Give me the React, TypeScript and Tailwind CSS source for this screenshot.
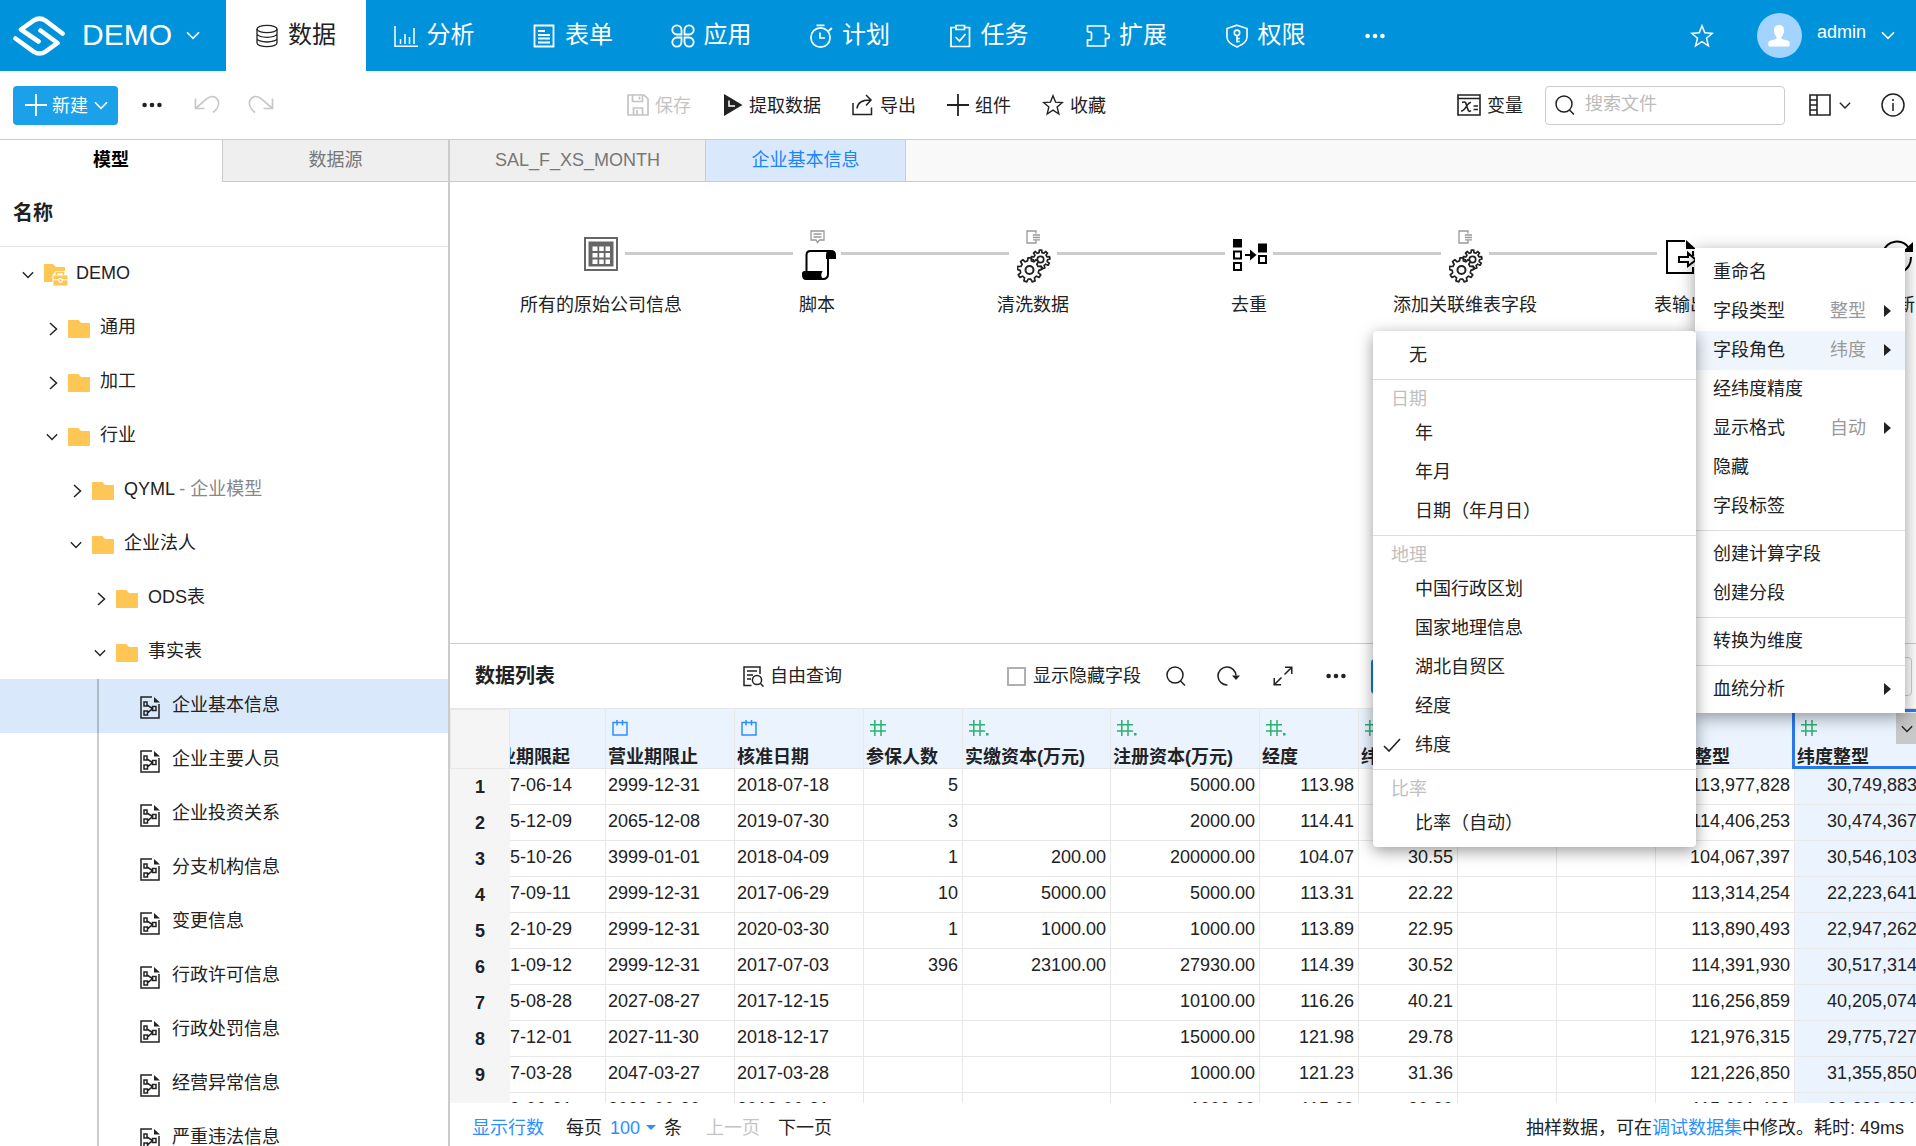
import React from "react";
import type { ReactNode } from "react";

function Svg({
  className,
  box,
  children,
  sw = 1.5,
}: {
  className: string;
  box: string;
  children: ReactNode;
  sw?: number;
}) {
  return (
    <svg
      className={`shrink-0 ${className}`}
      viewBox={box}
      fill="none"
      stroke="currentColor"
      strokeWidth={sw}
      aria-hidden="true"
    >
      {children}
    </svg>
  );
}

function ChevronDown({ className }: { className: string }) {
  return (
    <Svg className={className} box="0 0 14 9" sw={1.6}>
      <path d="M1 1.2 7 7.4 13 1.2" />
    </Svg>
  );
}

function Dots({ className }: { className: string }) {
  return (
    <svg className={`shrink-0 ${className}`} viewBox="0 0 20 6" fill="currentColor" aria-hidden="true">
      <circle cx="2.6" cy="3" r="2.3" />
      <circle cx="10" cy="3" r="2.3" />
      <circle cx="17.4" cy="3" r="2.3" />
    </svg>
  );
}

function Logo() {
  return (
    <Svg className="h-10 w-[52px]" box="0 0 52 40" sw={4.6}>
      <path strokeLinecap="round" strokeLinejoin="round" d="M49.5 17.5 32.5 4.6Q26.500 .6 20.500 4.6L8 13.500 25.500 25.500" />
      <path strokeLinecap="round" strokeLinejoin="round" d="M2.500 22.500 20.500 35.600Q26.500 39.400 32.500 35.600L44.500 27 27.500 14.500" />
    </Svg>
  );
}

function gearPath(cx: number, cy: number, outer: number, inner: number, teeth: number) {
  const points: string[] = [];
  const step = (Math.PI * 2) / teeth;
  for (let i = 0; i < teeth; i++) {
    const a = i * step - Math.PI / 2;
    const corners: [number, number][] = [
      [inner, -0.3],
      [outer, -0.18],
      [outer, 0.18],
      [inner, 0.3],
    ];
    for (const [r, t] of corners) {
      points.push(`${(cx + r * Math.cos(a + t * step)).toFixed(2)} ${(cy + r * Math.sin(a + t * step)).toFixed(2)}`);
    }
  }
  return `M${points.join("L")}Z`;
}

const navIcons: Record<string, ReactNode> = {
  数据: (
    <Svg className="h-6 w-6" box="0 0 24 24" sw={1.3}>
      <ellipse cx="12" cy="5" rx="10" ry="3.600" />
      <path d="M2 5v14c0 2 4.500 3.600 10 3.600s10-1.600 10-3.600V5M2 9.700c0 2 4.500 3.600 10 3.600s10-1.600 10-3.600M2 14.400C2 16.400 6.500 18 12 18s10-1.600 10-3.600" />
    </Svg>
  ),
  分析: (
    <Svg className="h-6 w-6" box="0 0 24 24">
      <path d="M1 2v20.200h23M6.500 15v5M11 10v10M15.500 13v7M20 4v16" />
    </Svg>
  ),
  表单: (
    <Svg className="h-6 w-6" box="0 0 24 24" sw={1.8}>
      <path d="M2.500 1.500h19v21h-19zM6 7h7M6 11h12M6 14.500h12M6 18.500h12" />
    </Svg>
  ),
  应用: (
    <Svg className="h-6 w-6" box="0 0 24 24" sw={1.8}>
      <path d="M10.500 10.500H6a4.600 4.600 0 1 1 4.500-4.600zM13.500 10.500H18a4.600 4.600 0 1 0-4.500-4.600zM10.500 13.500H6a4.600 4.600 0 1 0 4.500 4.600zM13.500 13.500H18a4.600 4.600 0 1 1-4.500 4.600z" />
    </Svg>
  ),
  计划: (
    <Svg className="h-6 w-6" box="0 0 24 24" sw={1.7}>
      <circle cx="11.500" cy="13.500" r="9.600" />
      <path d="M7.500 1.300h8M19.500 7l3.500-3M11 8.500V14h5" />
    </Svg>
  ),
  任务: (
    <Svg className="h-6 w-6" box="0 0 24 24" sw={1.7}>
      <path d="M7 3.500H3v19h18.500v-19H17M8 1.500h8.500v4H8zM7.500 13l4 4 6-7" />
    </Svg>
  ),
  扩展: (
    <Svg className="h-6 w-6" box="0 0 24 24" sw={1.7}>
      <path d="M1.500 8V2h18v7.500h1.500a2.500 2.500 0 0 1 0 5h-1.500V22h-18v-6h3a1 1 0 0 0 1-1v-1M1.500 8h3a1 1 0 0 1 1 1v5" />
    </Svg>
  ),
  权限: (
    <Svg className="h-6 w-6" box="0 0 24 24" sw={1.6}>
      <path d="M12 1.200 22 4.500V13c0 5-5 8-10 10C7 21 2 18 2 13V4.500z" />
      <circle cx="12" cy="8.800" r="2.700" />
      <path d="M12 11.500v7M12 14.500h2.800M12 17.500h2.800" />
    </Svg>
  ),
};

function Star({ className }: { className: string }) {
  return (
    <Svg className={className} box="0 0 24 24" sw={1.5}>
      <path d="m12 1.800 2.800 7 7.500.500-5.800 4.900 1.900 7.600L12 17.600l-6.400 4.200 1.900-7.600-5.800-4.900 7.500-.500z" />
    </Svg>
  );
}

function TopBar() {
  return (
    <header className="flex h-[71px] shrink-0 items-center bg-[#0092da] text-white">
      <button className="flex h-full w-[226px] shrink-0 items-center pl-[13px]">
        <Logo />
        <span className="ml-[17px] pb-0.5 text-[30px] leading-10">DEMO</span>
        <ChevronDown className="ml-3.5 h-[9px] w-3.5" />
      </button>
      <nav className="flex h-full w-[1109px] shrink-0">
        {Object.keys(navIcons).map((label, i) => (
          <button
            key={label}
            className={
              i === 0
                ? "flex flex-1 items-center gap-[9px] bg-white pl-[29px] text-2xl text-[#222]"
                : "flex flex-1 items-center gap-[9px] pl-[28px] text-2xl"
            }
          >
            {navIcons[label]}
            <span className="pb-0.5">{label}</span>
          </button>
        ))}
      </nav>
      <button className="ml-[30px]" aria-label="更多">
        <Dots className="h-1.5 w-5" />
      </button>
      <div className="ml-auto flex items-center pr-[21px]">
        <button aria-label="收藏夹">
          <Star className="h-6 w-6" />
        </button>
        <span className="ml-[43px] flex size-[45px] items-center justify-center rounded-full bg-[#a3d4ff]">
          <svg className="h-[22px] w-[22px]" viewBox="0 0 22 22" fill="white" aria-hidden="true">
            <path d="M11 0c3.500 0 5 2.300 5 5.200 0 3.300-1.300 5-2.500 6.800v2l6 1.600c1.600.500 2.200 1.200 2.200 2.600V20c0 .900-.500 1.500-1.500 1.500H1.800C.800 21.500.3 20.900.3 20v-1.800c0-1.400.6-2.100 2.200-2.600l6-1.600v-2C7.300 10.200 6 8.500 6 5.200 6 2.300 7.500 0 11 0z" />
          </svg>
        </span>
        <button className="ml-[15px] flex items-center gap-[15px] text-lg">
          <span className="pb-2">admin</span>
          <ChevronDown className="h-[9px] w-3.5" />
        </button>
      </div>
    </header>
  );
}

function Plus({ className }: { className: string }) {
  return (
    <Svg className={className} box="0 0 22 22" sw={1.8}>
      <path d="M11 0v22M0 11h22" />
    </Svg>
  );
}

function Magnifier({ className }: { className: string }) {
  return (
    <Svg className={className} box="0 0 20 20" sw={1.5}>
      <circle cx="9" cy="9" r="8" />
      <path d="m14.500 15 4.500 4.500" />
    </Svg>
  );
}

function ToolButton({ icon, label, muted }: { icon: ReactNode; label: string; muted?: boolean }) {
  return (
    <button className={muted ? "flex items-center gap-1.5 text-lg text-[#c4c4c4]" : "flex items-center gap-1.5 text-lg"}>
      {icon}
      <span className="pt-px">{label}</span>
    </button>
  );
}

function Toolbar() {
  return (
    <div className="flex h-[68px] shrink-0 items-center pl-[13px] pr-[11px]">
      <div className="flex w-[614px] shrink-0 items-center">
        <button className="flex h-[39px] w-[105px] items-center rounded bg-[#1ba0ea] pl-3 text-lg text-white">
          <Plus className="size-[22px]" />
          <span className="ml-[5px] pt-px">新建</span>
          <ChevronDown className="ml-1.5 h-[9px] w-3.5" />
        </button>
        <button className="ml-6" aria-label="更多操作">
          <Dots className="h-1.5 w-5" />
        </button>
        <button className="ml-8 text-[#c8c8c8]" aria-label="撤销">
          <Svg className="h-5 w-[26px]" box="0 0 26 20" sw={1.7}>
            <path d="M1.500 3.500v10h9M1.500 13.500 12 4.500C16 .500 21 .500 23.500 4.500c2.500 4 .500 9-4.500 13" />
          </Svg>
        </button>
        <button className="ml-7 text-[#c8c8c8]" aria-label="重做">
          <Svg className="h-5 w-[26px]" box="0 0 26 20" sw={1.7}>
            <path d="M24.500 3.500v10h-9M24.500 13.500 14 4.500C10 .500 5 .500 2.500 4.500c-2.500 4-.500 9 4.500 13" />
          </Svg>
        </button>
      </div>
      <div className="flex flex-1 items-center gap-[31px]">
        <ToolButton
          muted
          label="保存"
          icon={
            <Svg className="size-[22px]" box="0 0 22 22" sw={1.7}>
              <path d="M1 1h16l4 4v16H1zM5.500 1v6.500h10V1M12.500 2.500v3M6.500 21v-7h9v7M10 16v5" />
            </Svg>
          }
        />
        <ToolButton
          label="提取数据"
          icon={
            <svg className="h-[22px] w-[21px] shrink-0" viewBox="0 0 21 22" aria-hidden="true">
              <path fill="#222" d="M2 0 20.500 11 2 22z" />
              <path fill="none" stroke="white" strokeWidth="1.5" d="M7 6.500v5.500h6" />
            </svg>
          }
        />
        <ToolButton
          label="导出"
          icon={
            <Svg className="size-[22px]" box="0 0 22 22">
              <path d="M1 9v11.500h18.500v-7M5 14.500C5.500 9 10 6 18 6M14 1l5 5-5 5.500" />
            </Svg>
          }
        />
        <ToolButton label="组件" icon={<Plus className="size-[22px]" />} />
        <ToolButton label="收藏" icon={<Star className="size-[22px]" />} />
      </div>
      <div className="flex items-center">
        <ToolButton
          label="变量"
          icon={
            <Svg className="h-[22px] w-6" box="0 0 24 22" sw={1.6}>
              <path d="M1 1h22v20H1zM1 4.500h22" />
              <path d="M5 8.500c4.500-2 4 2 5 4.500s1.500 6 4 3.500M14 8.500c-4-.500-5.500 9-10 8.500M16.500 12h4.500M16.500 15.500h4.500" />
            </Svg>
          }
        />
        <label className="ml-[22px] flex h-[39px] w-60 items-center rounded border border-[#ccc] pl-[9px]">
          <Magnifier className="size-5" />
          <input
            type="text"
            aria-label="搜索文件"
            placeholder="搜索文件"
            className="ml-2.5 w-0 flex-1 bg-transparent pb-0.5 text-lg outline-none placeholder:text-[#bbb]"
          />
        </label>
        <button className="ml-6 flex items-center gap-2" aria-label="布局">
          <Svg className="size-[22px]" box="0 0 22 22" sw={1.6}>
            <path d="M1 1h20v20H1zM8 1v20M1 6h7M1 11h7M1 16h7" />
          </Svg>
          <ChevronDown className="h-[9px] w-3" />
        </button>
        <button className="ml-[30px]" aria-label="信息">
          <Svg className="size-6" box="0 0 24 24" sw={1.5}>
            <circle cx="12" cy="12" r="11" />
            <path d="M12 10v8M12 6v2" />
          </Svg>
        </button>
      </div>
    </div>
  );
}

function Folder() {
  return (
    <svg className="mt-0.5 h-[18px] w-[22px] shrink-0" viewBox="0 0 22 18" fill="#fdc655" aria-hidden="true">
      <path d="M1 0h9.500l2.500 3h8q1 0 1 1v13q0 1-1 1H1q-1 0-1-1V1q0-1 1-1z" />
    </svg>
  );
}

function ProjectFolder() {
  return (
    <svg className="mt-0.5 h-[22px] w-6 shrink-0" viewBox="0 0 24 22" aria-hidden="true">
      <path fill="#fdc655" d="M0 0h9l3 3h9v4h-9.500L8.500 11v7H0z" />
      <path fill="none" stroke="#fdc655" strokeWidth="1.6" d="M12.500 11V8.500h7V11" />
      <path fill="#fdc655" d="M9.500 11.500h14v10h-14z" />
      <path stroke="white" strokeWidth="1.2" d="M9 15.800h15" />
      <circle cx="16.500" cy="16.500" r="1.800" fill="#fdc655" stroke="white" strokeWidth="1.2" />
    </svg>
  );
}

function ModelFile() {
  return (
    <svg className="mt-0.5 h-[23px] w-5 shrink-0" viewBox="0 0 20 23" fill="none" stroke="#222" strokeWidth="1.5" aria-hidden="true">
      <path d="M12 1H1v21h18V8" />
      <path fill="#222" stroke="none" d="M14 1v5.500h6z" />
      <path d="M4 6h3v4H4zM4 15h3.500v4H4zM12.500 10.500H16v4h-3.500zM7 9l5.500 3.500L7.500 17" />
    </svg>
  );
}

type TreeNode = { label: string; note?: string; level: number; kind: "open" | "closed" | "file" };

const tree: TreeNode[] = [
  { label: "DEMO", level: 0, kind: "open" },
  { label: "通用", level: 1, kind: "closed" },
  { label: "加工", level: 1, kind: "closed" },
  { label: "行业", level: 1, kind: "open" },
  { label: "QYML", note: "企业模型", level: 2, kind: "closed" },
  { label: "企业法人", level: 2, kind: "open" },
  { label: "ODS表", level: 3, kind: "closed" },
  { label: "事实表", level: 3, kind: "open" },
  { label: "企业基本信息", level: 4, kind: "file" },
  { label: "企业主要人员", level: 4, kind: "file" },
  { label: "企业投资关系", level: 4, kind: "file" },
  { label: "分支机构信息", level: 4, kind: "file" },
  { label: "变更信息", level: 4, kind: "file" },
  { label: "行政许可信息", level: 4, kind: "file" },
  { label: "行政处罚信息", level: 4, kind: "file" },
  { label: "经营异常信息", level: 4, kind: "file" },
  { label: "严重违法信息", level: 4, kind: "file" },
];

function Indent({ level }: { level: number }) {
  return (
    <>
      {Array.from({ length: level }, (_, i) => (
        <span key={i} className="w-6 shrink-0" />
      ))}
    </>
  );
}

function TreeRow({ node }: { node: TreeNode }) {
  if (node.kind === "file") {
    const selected = node.label === "企业基本信息";
    return (
      <button
        role="treeitem"
        aria-selected={selected}
        className={
          selected
            ? "flex h-[54px] w-full shrink-0 items-center bg-[#d9e9fb] text-left text-lg"
            : "flex h-[54px] w-full shrink-0 items-center text-left text-lg"
        }
      >
        <span className="ml-[97px] mr-[41px] h-full w-0.5 bg-black/20" />
        <ModelFile />
        <span className="ml-3 pb-0.5">{node.label}</span>
      </button>
    );
  }
  return (
    <button role="treeitem" className="flex h-[54px] w-full shrink-0 items-center pl-5 text-left text-lg">
      <Indent level={node.level} />
      <span className="mt-0.5 flex w-4 shrink-0 items-center justify-center">
        {node.kind === "open" ? (
          <ChevronDown className="h-2 w-3" />
        ) : (
          <Svg className="ml-0.5 h-3.5 w-[9px]" box="0 0 9 14">
            <path d="M1 1l6.500 6L1 13" />
          </Svg>
        )}
      </span>
      <span className="ml-2 mr-2 flex w-6 shrink-0">{node.level === 0 ? <ProjectFolder /> : <Folder />}</span>
      <span className="pb-0.5">
        {node.label}
        {node.note && <span className="text-[#888]"> - {node.note}</span>}
      </span>
    </button>
  );
}

function Sidebar() {
  return (
    <aside className="flex w-[450px] shrink-0 flex-col overflow-hidden border-r-2 border-[#ccc]">
      <div className="flex h-[42px] shrink-0 text-lg">
        <button className="w-[222px] pb-0.5 font-bold text-black">模型</button>
        <button className="flex-1 border-b border-l border-[#ccc] bg-[#efefef] pb-0.5 text-[#777]">数据源</button>
      </div>
      <div className="flex h-[65px] shrink-0 items-center border-b border-[#e6e6e6] pl-[13px] pb-0.5 text-xl font-bold">名称</div>
      <div role="tree" className="flex min-h-0 flex-1 flex-col overflow-hidden">
        {tree.map((node) => (
          <TreeRow key={node.label} node={node} />
        ))}
      </div>
    </aside>
  );
}

function GearsIcon() {
  return (
    <Svg className="ml-0.5 mt-3 size-[34px]" box="0 0 34 34" sw={1.7}>
      <path strokeLinejoin="round" d={gearPath(23.5, 10.5, 9.5, 7, 9)} />
      <circle cx="23.500" cy="10.500" r="3.200" />
      <path strokeLinejoin="round" fill="white" d={gearPath(12.5, 21, 12.2, 9.3, 9)} />
      <circle cx="12.500" cy="21" r="4" strokeWidth="2" />
    </Svg>
  );
}

function OutMark() {
  return (
    <Svg className="h-3.5 w-3.5" box="0 0 14 14" sw={1.3}>
      <path d="M10 3.500V1H1v12h9v-2.500M7 5h7M7 7.500h7M7 9.800h7" />
    </Svg>
  );
}

const stages: { label: string; icon: ReactNode; mark?: ReactNode }[] = [
  {
    label: "所有的原始公司信息",
    icon: (
      <svg className="size-[34px]" viewBox="0 0 34 34" aria-hidden="true">
        <path fill="none" stroke="#666" strokeWidth="2" d="M1 1h32v32H1z" />
        <path fill="#666" d="M4.500 4.500h25v25h-25z" />
        <path
          fill="white"
          d="M8.500 9.500h5v4.500h-5zM15.200 9.500h4.500v4.500h-4.500zM21.500 9.500h4.500v4.500h-4.500zM8.500 16h5v4.500h-5zM15.200 16h4.500v4.500h-4.500zM21.500 16h4.500v4.500h-4.500zM8.500 22.500h5v4.500h-5zM15.200 22.500h4.500v4.500h-4.500zM21.500 22.500h4.500v4.500h-4.500z"
        />
      </svg>
    ),
  },
  {
    label: "脚本",
    icon: (
      <svg className="ml-1 mt-[13px] h-[30px] w-[34px]" viewBox="0 0 34 30" fill="none" stroke="black" strokeWidth="2" aria-hidden="true">
        <path d="M4.500 22V5q0-4 4-4H29" />
        <path fill="black" d="M25 8V5q0-4 4-4t4 4v3z" />
        <path d="M26 7v17q0 5-5 5h-4" />
        <path fill="black" d="M1 23.500Q1 22 2.500 22H19q-2 4 1 7H4q-3 0-3-4z" />
      </svg>
    ),
    mark: (
      <Svg className="h-3.5 w-[15px]" box="0 0 15 14" sw={1.3}>
        <path d="M1 1h13v9H9.500L7.500 12.500 6 10H1zM3.500 4h8M3.500 7h8" />
      </Svg>
    ),
  },
  { label: "清洗数据", icon: <GearsIcon />, mark: <OutMark /> },
  {
    label: "去重",
    icon: (
      <svg className="ml-0.5 mt-px size-[34px]" viewBox="0 0 34 34" fill="none" stroke="black" strokeWidth="2" aria-hidden="true">
        <path fill="black" d="M1 2h7v6.500H1zM26 6.500h7v7h-7z" />
        <path d="M1 13.500h7v7H1zM1 25h7v7H1zM26 18h7v7h-7zM12 17h6" />
        <path fill="black" stroke="none" d="M17 11.500 23.500 17 17 22.500z" />
      </svg>
    ),
  },
  { label: "添加关联维表字段", icon: <GearsIcon />, mark: <OutMark /> },
  {
    label: "表输出",
    icon: (
      <svg className="mt-[3px] h-[34px] w-[34px]" viewBox="0 0 34 34" fill="none" stroke="black" strokeWidth="2" aria-hidden="true">
        <path d="M21 1H3v32h26v-6M29 11v5M15 17h9v-4l8 7-8 6v-4h-9z" />
        <path fill="black" stroke="none" d="M22 0v9h10z" />
      </svg>
    ),
  },
  {
    label: "刷新",
    icon: (
      <svg className="mt-[3px] h-[34px] w-[34px]" viewBox="0 0 34 34" fill="none" stroke="black" strokeWidth="2" aria-hidden="true">
        <path d="M3 12C7 0 22-2 29 8M31 17c0 6-3 12-9 15" />
        <path fill="black" stroke="none" d="M33 2v10H22z" />
      </svg>
    ),
  },
];

function FlowCanvas() {
  return (
    <section className="min-h-0 flex-1 overflow-hidden">
      <ol className="flex w-max pl-[43px] pt-[48px]">
        {stages.map((stage, i) => (
          <li key={stage.label} className="relative flex w-[216px] shrink-0 flex-col items-center">
            <div className="flex h-14 flex-col items-center">
              <span className="absolute top-0 text-[#999]">{stage.mark}</span>
              <span className="mt-[7px] flex h-[34px] items-start">{stage.icon}</span>
            </div>
            {i < stages.length - 1 && <span className="absolute left-[132px] top-[22px] h-[3px] w-[168px] bg-[#ccc]" />}
            <span className="mt-[5px] whitespace-nowrap text-lg">{stage.label}</span>
          </li>
        ))}
      </ol>
    </section>
  );
}

type Column = { label: string; type?: "date" | "int" | "dec"; width: number };

const columns: Column[] = [
  { label: "营业期限起", type: "date", width: 96 },
  { label: "营业期限止", type: "date", width: 129 },
  { label: "核准日期", type: "date", width: 129 },
  { label: "参保人数", type: "int", width: 99 },
  { label: "实缴资本(万元)", type: "dec", width: 148 },
  { label: "注册资本(万元)", type: "dec", width: 149 },
  { label: "经度", type: "dec", width: 99 },
  { label: "纬度", type: "dec", width: 99 },
  { label: "", width: 99 },
  { label: "", width: 99 },
  { label: "经度整型", type: "int", width: 139 },
  { label: "纬度整型", type: "int", width: 127 },
];

const rows: string[][] = [
  ["2017-06-14", "2999-12-31", "2018-07-18", "5", "", "5000.00", "113.98", "30.75", "", "", "113,977,828", "30,749,883"],
  ["2015-12-09", "2065-12-08", "2019-07-30", "3", "", "2000.00", "114.41", "30.47", "", "", "114,406,253", "30,474,367"],
  ["2015-10-26", "3999-01-01", "2018-04-09", "1", "200.00", "200000.00", "104.07", "30.55", "", "", "104,067,397", "30,546,103"],
  ["2017-09-11", "2999-12-31", "2017-06-29", "10", "5000.00", "5000.00", "113.31", "22.22", "", "", "113,314,254", "22,223,641"],
  ["2012-10-29", "2999-12-31", "2020-03-30", "1", "1000.00", "1000.00", "113.89", "22.95", "", "", "113,890,493", "22,947,262"],
  ["2001-09-12", "2999-12-31", "2017-07-03", "396", "23100.00", "27930.00", "114.39", "30.52", "", "", "114,391,930", "30,517,314"],
  ["2005-08-28", "2027-08-27", "2017-12-15", "", "", "10100.00", "116.26", "40.21", "", "", "116,256,859", "40,205,074"],
  ["2007-12-01", "2027-11-30", "2018-12-17", "", "", "15000.00", "121.98", "29.78", "", "", "121,976,315", "29,775,727"],
  ["2017-03-28", "2047-03-27", "2017-03-28", "", "", "1000.00", "121.23", "31.36", "", "", "121,226,850", "31,355,850"],
  ["2009-06-21", "2039-06-20", "2018-06-21", "", "", "1000.00", "115.69", "30.30", "", "", "115,691,493", "30,299,231"],
];

function TypeIcon({ type }: { type: Column["type"] }) {
  if (type === "date") {
    return (
      <Svg className="size-4 text-[#2b90ff]" box="0 0 16 16">
        <path d="M1 2.500h14v12.500H1zM5 0v5.500M10.500 0v5.500" />
      </Svg>
    );
  }
  if (type === undefined) return null;
  return (
    <Svg className="h-4 w-5 text-[#2bb170]" box="0 0 20 16">
      <path d="M0 4.700h16M0 11h16M4.800 0v16M11 0v16" />
      {type === "dec" && <path fill="currentColor" stroke="none" d="M17 13h2.500v2.500H17z" />}
    </Svg>
  );
}

function DataGrid() {
  return (
    <div className="h-[394px] shrink-0 overflow-hidden">
      <table className="w-[1472px] table-fixed border-separate border-spacing-0 text-lg leading-[27px]">
        <colgroup>
          <col className="w-[60px]" />
          {columns.map((c, i) => (
            <col key={i} style={{ width: c.width }} />
          ))}
        </colgroup>
        <thead>
          <tr className="h-[60px]">
            <th className="border border-[#e8e8e8] bg-[#f5f5f5]" aria-label="行号" />
            {columns.map((c, i) => {
              const selected = i === columns.length - 1;
              return (
                <th
                  key={i}
                  scope="col"
                  className="relative border-b border-r border-[#e8e8e8] bg-[#eaf3fe] p-0 text-left align-top font-bold"
                >
                  <div className="h-[59px] overflow-hidden">
                    <div className={i === 0 ? "-ml-[32px] pl-0.5" : "pl-0.5"}>
                      <div className="ml-1 h-9 pt-[11px]">
                        <TypeIcon type={c.type} />
                      </div>
                      <div className="whitespace-nowrap leading-6">{c.label}</div>
                    </div>
                  </div>
                  {selected && (
                    <>
                      <button
                        aria-label="字段菜单"
                        className="absolute left-[101px] top-1 flex h-[31px] w-[26px] items-center bg-[#c8c8c8] pl-[5px]"
                      >
                        <ChevronDown className="h-2 w-3" />
                      </button>
                      <span className="pointer-events-none absolute -bottom-px -left-[3px] right-0 top-0 border-[3px] border-[#2b78ee]" />
                    </>
                  )}
                </th>
              );
            })}
          </tr>
        </thead>
        <tbody>
          {rows.map((row, r) => (
            <tr key={r} className="h-9">
              <th scope="row" className="bg-[#f5f5f5] p-0 text-center font-bold">
                {r + 1}
              </th>
              {row.map((value, i) => (
                <td
                  key={i}
                  className={
                    i === 0
                      ? "overflow-hidden border-b border-r border-[#e8e8e8] p-0 pb-0.5"
                      : i < 3
                        ? "border-b border-r border-[#e8e8e8] p-0 pb-0.5 pl-0.5"
                        : i === 11
                          ? "border-b border-r border-[#e8e8e8] bg-[#eaf3fe] p-0 pb-0.5 pr-1 text-right"
                          : "border-b border-r border-[#e8e8e8] p-0 pb-0.5 pr-1 text-right"
                  }
                >
                  {i === 0 ? <div className="-ml-[30px] whitespace-nowrap">{value}</div> : value}
                </td>
              ))}
            </tr>
          ))}
        </tbody>
      </table>
    </div>
  );
}

function DataPanel() {
  return (
    <section className="flex shrink-0 flex-col border-t border-[#ccc]">
      <div className="flex h-[65px] items-center border-b border-[#e6e6e6] pl-[25px] pr-1 text-lg">
        <h2 className="text-xl font-bold">数据列表</h2>
        <button className="ml-[188px] flex items-center gap-1.5">
          <Svg className="size-[21px]" box="0 0 21 21">
            <path d="M8.500 19.500H1V1h16v7M4 5h10M4 9h6M4 13h4" />
            <circle cx="14" cy="14" r="4.600" />
            <path d="m17.500 17.500 3 3" />
          </Svg>
          自由查询
        </button>
        <label className="ml-[165px] flex items-center gap-[7px]">
          <input type="checkbox" className="size-[19px] appearance-none border-2 border-[#b0b0b0] bg-white" />
          显示隐藏字段
        </label>
        <button className="ml-[25px]" aria-label="查找">
          <Magnifier className="size-5" />
        </button>
        <button className="ml-[31px]" aria-label="刷新">
          <Svg className="h-5 w-[23px]" box="0 0 23 20" sw={1.6}>
            <path d="M10.500 19A9 9 0 1 1 19 9.500" />
            <path fill="currentColor" stroke="none" d="M15 9.500h8L19 14z" />
          </Svg>
        </button>
        <button className="ml-[33px]" aria-label="全屏">
          <Svg className="size-5" box="0 0 20 20">
            <path d="M12 1.200h6.800V8M18.800 1.200 11.500 8.500M1.200 12v6.800H8M1.200 18.800 8.500 11.500" />
          </Svg>
        </button>
        <button className="ml-[33px]" aria-label="更多">
          <Dots className="h-1.5 w-5" />
        </button>
        <button className="ml-[25px] h-[35px] w-[100px] rounded-sm bg-[#0b7ae6]" aria-label="字段" />
        <input type="text" aria-label="筛选" className="ml-auto h-[39px] w-[200px] rounded border border-[#ccc]" />
      </div>
      <DataGrid />
      <footer className="flex h-[43px] items-center pl-[22px] pr-3 pt-1.5 text-lg">
        <a href="#rows" className="text-[#2b90ff]">
          显示行数
        </a>
        <label className="ml-[22px] flex items-center">
          每页
          <select className="ml-2 w-9 appearance-none bg-transparent text-[#2b90ff] outline-none" defaultValue="100">
            <option>100</option>
          </select>
          <svg className="h-[5px] w-2.5" viewBox="0 0 10 5" fill="#2b90ff" aria-hidden="true">
            <path d="M0 0h10L5 5z" />
          </svg>
        </label>
        <span className="ml-2">条</span>
        <button className="ml-6 text-[#c4c4c4]">上一页</button>
        <button className="ml-[18px]">下一页</button>
        <p className="ml-auto">
          抽样数据，可在
          <a href="#dataset" className="text-[#2b90ff]">
            调试数据集
          </a>
          中修改。耗时: 49ms
        </p>
      </footer>
    </section>
  );
}

const roleGroups: { title: string; items: string[] }[] = [
  { title: "日期", items: ["年", "年月", "日期（年月日）"] },
  { title: "地理", items: ["中国行政区划", "国家地理信息", "湖北自贸区", "经度", "纬度"] },
  { title: "比率", items: ["比率（自动）"] },
];

function RoleMenu() {
  return (
    <div
      role="menu"
      className="absolute right-full top-0 -mr-px w-[323px] rounded bg-white pb-[5px] pt-1 shadow-[0_4px_16px_rgba(0,0,0,0.4)]"
    >
      <button role="menuitem" className="flex h-[39px] w-full items-center pl-9">
        无
      </button>
      {roleGroups.map((group) => (
        <div key={group.title} role="group" aria-label={group.title}>
          <div className="mb-1 mt-[5px] h-px bg-[#ddd]" />
          <div className="flex h-[29px] items-center pl-[18px] text-[#c0c0c0]">{group.title}</div>
          {group.items.map((item) => (
            <button key={item} role="menuitemradio" aria-checked={item === "纬度"} className="flex h-[39px] w-full items-center pl-2.5">
              <span className="w-8">
                {item === "纬度" && (
                  <Svg className="h-3.5 w-[18px]" box="0 0 18 14" sw={1.6}>
                    <path d="m1 8 5 5L17 1" />
                  </Svg>
                )}
              </span>
              {item}
            </button>
          ))}
        </div>
      ))}
    </div>
  );
}

const fieldMenu: { label: string; value?: string; arrow?: boolean }[][] = [
  [
    { label: "重命名" },
    { label: "字段类型", value: "整型", arrow: true },
    { label: "字段角色", value: "纬度", arrow: true },
    { label: "经纬度精度" },
    { label: "显示格式", value: "自动", arrow: true },
    { label: "隐藏" },
    { label: "字段标签" },
  ],
  [{ label: "创建计算字段" }, { label: "创建分段" }],
  [{ label: "转换为维度" }],
  [{ label: "血统分析", arrow: true }],
];

function FieldMenu() {
  return (
    <div
      role="menu"
      className="absolute right-[11px] top-[248px] z-20 w-[210px] bg-white pb-1 pt-[5px] text-lg shadow-[0_4px_16px_rgba(0,0,0,0.4)]"
    >
      {fieldMenu.map((group, g) => (
        <div key={g}>
          {g > 0 && <div className="my-1 h-px bg-[#ddd]" />}
          {group.map((item) => {
            const active = item.label === "字段角色";
            return (
              <div key={item.label} className={active ? "relative bg-[#eff5fd]" : undefined}>
                <button role="menuitem" className="flex h-[39px] w-full items-center pb-0.5 pl-[18px] pr-3.5">
                  {item.label}
                  <span className="ml-auto text-[#999]">{item.value}</span>
                  {item.arrow && (
                    <svg className="ml-[18px] h-3 w-[7px]" viewBox="0 0 7 12" fill="#222" aria-hidden="true">
                      <path d="M0 0v12l7-6z" />
                    </svg>
                  )}
                </button>
                {active && <RoleMenu />}
              </div>
            );
          })}
        </div>
      ))}
    </div>
  );
}

export default function App() {
  return (
    <div className='relative flex h-screen flex-col overflow-hidden bg-white font-["Liberation_Sans","Noto_Sans_CJK_SC",sans-serif] text-[#222]'>
      <TopBar />
      <Toolbar />
      <div className="flex min-h-0 flex-1 border-t border-[#ccc]">
        <Sidebar />
        <main className="flex min-w-0 flex-1 flex-col overflow-hidden">
          <div className="flex h-[42px] shrink-0 border-b border-[#ccc] bg-[#f9f9f9] text-lg">
            <button className="w-[256px] border-r border-[#ccc] bg-[#efefef] pb-0.5 text-[#777]">SAL_F_XS_MONTH</button>
            <button className="w-[200px] border-r border-[#ccc] bg-[#d9e9fb] pb-0.5 text-[#1a84ff]">企业基本信息</button>
          </div>
          <FlowCanvas />
          <DataPanel />
        </main>
      </div>
      <FieldMenu />
    </div>
  );
}
